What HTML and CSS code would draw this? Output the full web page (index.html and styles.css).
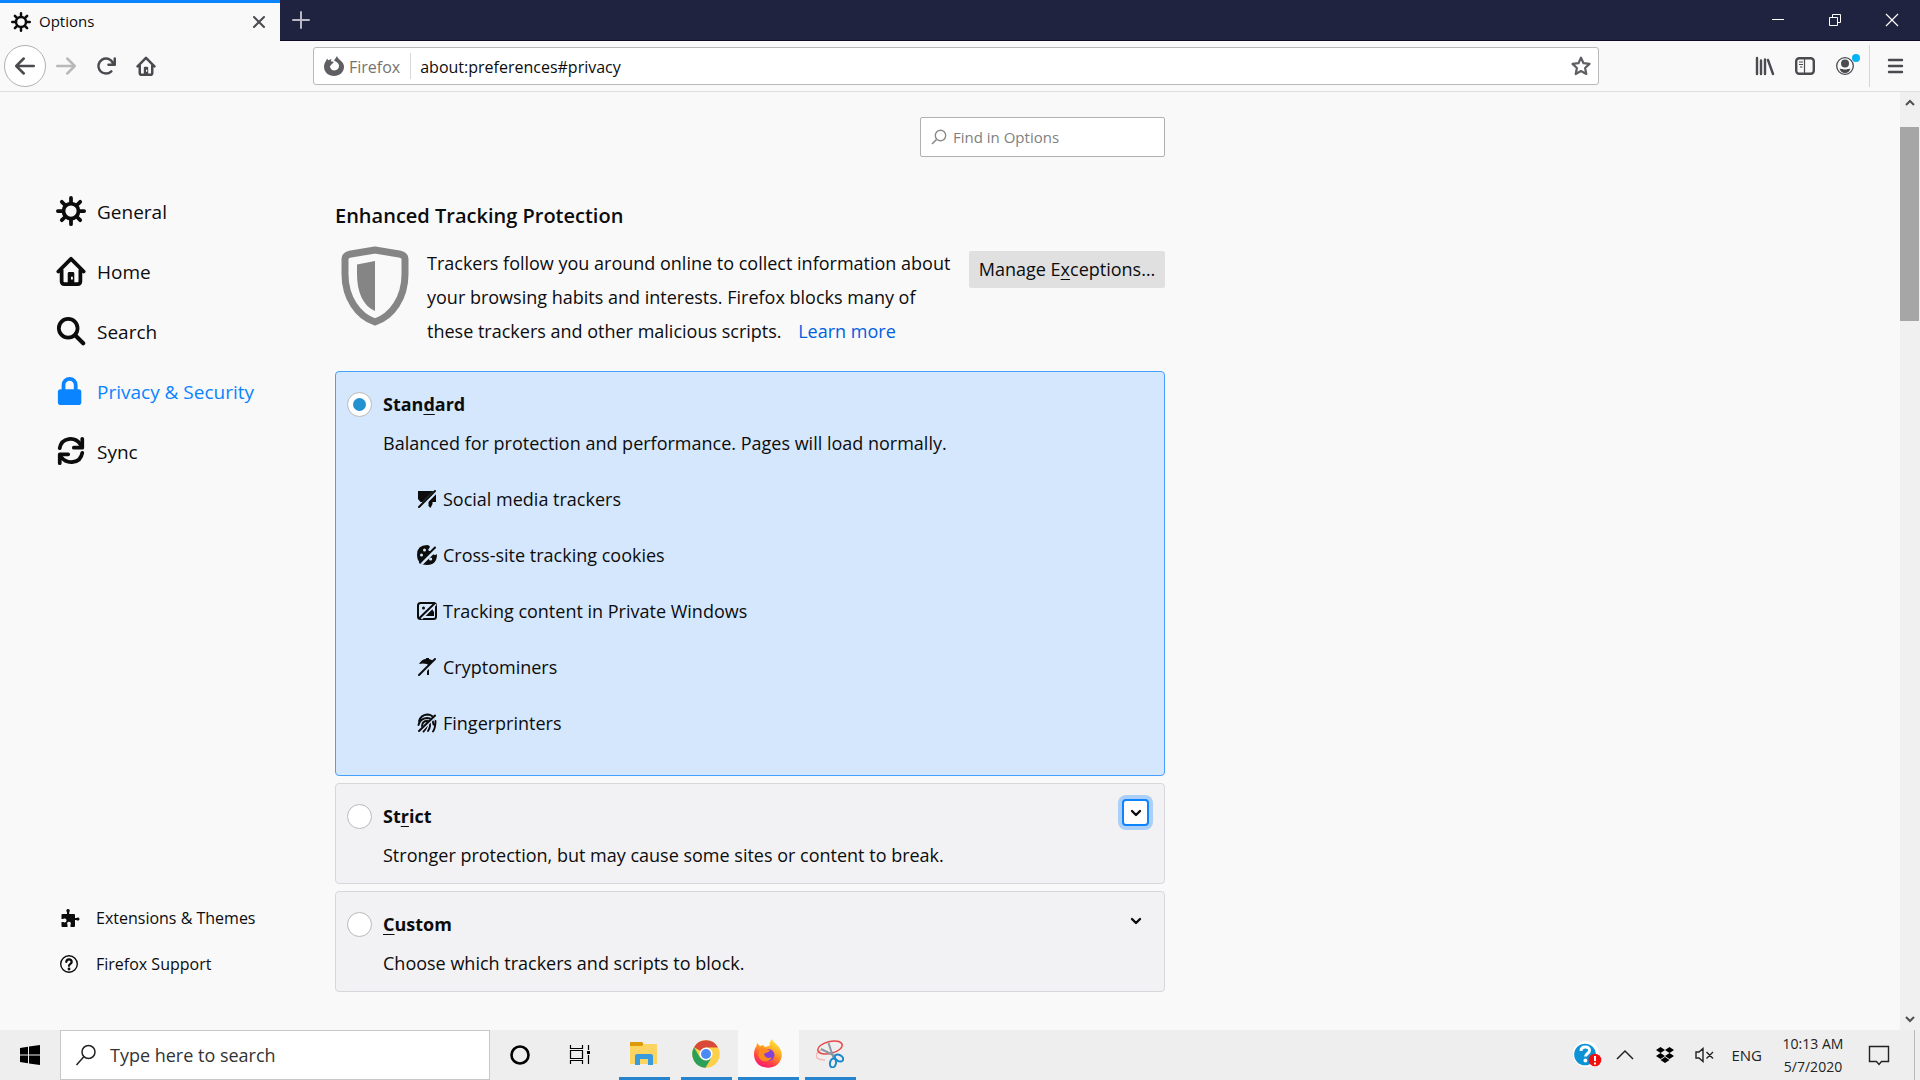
FILE: index.html
```html
<!DOCTYPE html>
<html lang="en">
<head>
  <meta charset="UTF-8">
  <meta name="viewport" content="width=device-width, initial-scale=1.0">
  <title>Options</title>
  <link rel="stylesheet" href="styles.css">
</head>
<body>

<!-- Shared icons -->
<svg class="sprite" aria-hidden="true">
  <symbol id="gear" viewBox="0 0 32 32">
    <circle cx="16" cy="16" r="8" fill="none" stroke="currentColor" stroke-width="4"/>
    <path d="M16 2v5M16 25v5M2 16h5M25 16h5M6.2 6.2l3.4 3.4M22.4 22.4l3.4 3.4M6.2 25.8l3.4-3.4M22.4 9.6l3.4-3.4" stroke="currentColor" stroke-width="4" stroke-linecap="round"/>
  </symbol>
  <symbol id="home" viewBox="0 0 32 32">
    <path d="M2.5 16.500L16 3l13.500 13.500M6 15v12q0 3 3 3h14q3 0 3-3V15" fill="none" stroke="currentColor" stroke-width="4" stroke-linecap="round" stroke-linejoin="round"/>
    <path fill-rule="evenodd" d="M12.500 18.500q0-1.500 1.500-1.500h4q1.500 0 1.500 1.500V30h-7zM16 22h2v3h-2z" fill="currentColor"/>
  </symbol>
  <symbol id="chevron" viewBox="0 0 12 12">
    <path d="M2 4l4 4 4-4" fill="none" stroke="currentColor" stroke-width="2.400" stroke-linecap="round" stroke-linejoin="round"/>
  </symbol>
</svg>

<!-- Tab strip -->
<header class="tabbar">
  <div class="tab">
    <svg class="tab-icon"><use href="#gear"/></svg>
    <span class="tab-title">Options</span>
    <button class="plain" aria-label="Close tab">
      <svg width="14" height="14" viewBox="0 0 14 14"><path d="M2 2l10 10M12 2L2 12" stroke="#4a4a4f" stroke-width="2" stroke-linecap="round"/></svg>
    </button>
  </div>
  <button class="plain new-tab" aria-label="New tab">
    <svg width="18" height="18" viewBox="0 0 18 18"><path d="M9 1v16M1 9h16" stroke="#b8b9c4" stroke-width="2" stroke-linecap="round"/></svg>
  </button>
  <div class="window-buttons">
    <button class="plain" aria-label="Minimize"><svg width="14" height="14"><path d="M1 6.500h12" stroke="#fff"/></svg></button>
    <button class="plain" aria-label="Restore"><svg width="14" height="14"><path d="M1.500 4.500h8v8h-8zM4.500 4V1.500h8v8H10" fill="none" stroke="#fff"/></svg></button>
    <button class="plain" aria-label="Close"><svg width="14" height="14"><path d="M1 1l12 12M13 1L1 13" stroke="#fff" stroke-width="1.200"/></svg></button>
  </div>
</header>

<!-- Navigation toolbar -->
<nav class="toolbar">
  <div class="nav-buttons">
    <button class="plain back" aria-label="Back">
      <svg width="20" height="20" viewBox="0 0 16 16"><path d="M15 7H3.414l4.293-4.293a1 1 0 0 0-1.414-1.414l-6 6a1 1 0 0 0 0 1.414l6 6a1 1 0 0 0 1.414-1.414L3.414 9H15a1 1 0 0 0 0-2z" fill="currentColor"/></svg>
    </button>
    <button class="plain forward" aria-label="Forward" disabled>
      <svg width="20" height="20" viewBox="0 0 16 16"><path d="M1 7h11.586L8.293 2.707a1 1 0 0 1 1.414-1.414l6 6a1 1 0 0 1 0 1.414l-6 6a1 1 0 0 1-1.414-1.414L12.586 9H1a1 1 0 0 1 0-2z" fill="currentColor"/></svg>
    </button>
    <button class="plain" aria-label="Reload">
      <svg width="20" height="20" viewBox="0 0 16 16"><path d="M15 1a1 1 0 0 0-1 1v2.418A6.995 6.995 0 1 0 8 15a6.954 6.954 0 0 0 4.950-2.050 1 1 0 0 0-1.414-1.414A5.019 5.019 0 1 1 12.549 6H10a1 1 0 0 0 0 2h5a1 1 0 0 0 1-1V2a1 1 0 0 0-1-1z" fill="currentColor"/></svg>
    </button>
    <button class="plain" aria-label="Home"><svg width="20" height="20"><use href="#home"/></svg></button>
  </div>
  <div class="urlbar">
    <svg width="20" height="20" viewBox="0 0 20 20"><path d="M13 0c.5 2.500 2.500 3 4 5 2 1.500 3 3.500 3 6 0 5-4.500 9-10 9S0 16 0 11c0-2.500.6-4.500 2-6 .1-1 .5-2 1.300-2.600.2.900.6 1.500 1.300 1.900C5.500 3.600 6.300 3 7.600 2.900 7 3.800 7 4.500 7 5.200c1 .2 2.300.2 2.700 1-.2.900-1.400 1.300-2.200 2 0 .9-1 1-1.700 2 .6 2.800 2.300 4.300 4.700 4.300 2.700 0 4.500-2 4.500-4.400 0-2-1-3-2.500-4L10 4.500C10.800 3 12 2 13 0z" fill="#5f5f63"/></svg>
    <span class="identity">Firefox</span>
    <input class="address" type="text" value="about:preferences#privacy" aria-label="Address">
    <button class="plain" aria-label="Bookmark this page">
      <svg width="20" height="20" viewBox="0 0 20 20"><path d="M10 1.700l2.500 5.500 6 .7-4.400 4.100 1.200 6-5.300-3-5.300 3 1.200-6L1.500 7.900l6-.7z" fill="none" stroke="#5f5f63" stroke-width="2.200" stroke-linejoin="round"/></svg>
    </button>
  </div>
  <div class="tools">
    <button class="plain" aria-label="Library">
      <svg width="20" height="20" viewBox="0 0 20 20"><path d="M2 2v16M6 4.500V18M10 3.500V18M13 4l5 14" stroke="currentColor" stroke-width="2.400" stroke-linecap="round"/></svg>
    </button>
    <button class="plain" aria-label="Sidebars">
      <svg width="20" height="20" viewBox="0 0 20 20"><rect x="1.200" y="2.200" width="17.600" height="15.600" rx="3" fill="none" stroke="currentColor" stroke-width="2.400"/><path d="M9.500 2v16" stroke="currentColor" stroke-width="1.200"/><path d="M4 6h4M4 8.500h4M5 11h2.500" stroke="currentColor" stroke-width="1.200"/></svg>
    </button>
    <button class="plain account" aria-label="Account">
      <svg width="20" height="20" viewBox="0 0 20 20"><circle cx="10" cy="10" r="8.300" fill="none" stroke="currentColor" stroke-width="1.300"/><circle cx="10" cy="7.500" r="4" fill="currentColor"/><path d="M4.500 12.500q2 .5 3 .5 2.500 1 5 0 1 0 3-.5-1.500 4.500-5.500 4.500t-5.500-4.500z" fill="currentColor"/></svg>
      <span class="dot"></span>
    </button>
    <button class="plain menu" aria-label="Open menu">
      <svg width="20" height="20" viewBox="0 0 20 20"><path d="M4 4h13M4 10h13M4 16h13" stroke="currentColor" stroke-width="2.400" stroke-linecap="round"/></svg>
    </button>
  </div>
</nav>

<!-- Page -->
<div class="page">
  <aside class="sidebar">
    <nav class="categories">
      <a href="#general"><svg class="cat-icon"><use href="#gear"/></svg>General</a>
      <a href="#home-page"><svg class="cat-icon"><use href="#home"/></svg>Home</a>
      <a href="#search"><svg class="cat-icon" viewBox="0 0 32 32"><circle cx="13" cy="13" r="10" fill="none" stroke="currentColor" stroke-width="4"/><path d="M20.500 20.500l8.500 8.500" stroke="currentColor" stroke-width="4.400" stroke-linecap="round"/></svg>Search</a>
      <a href="#privacy" class="selected"><svg class="cat-icon" viewBox="0 0 32 32"><rect x="2" y="14" width="25" height="17" rx="3" fill="currentColor"/><path d="M8 15V9.500a6.500 6.500 0 0 1 13 0V15" fill="none" stroke="currentColor" stroke-width="4"/></svg>Privacy &amp; Security</a>
      <a href="#sync"><svg class="cat-icon" viewBox="0 0 32 32"><path d="M4 13C6 1.500 20 0 26 9M28 18C26 29.500 12 31 5 22" fill="none" stroke="currentColor" stroke-width="4" stroke-linecap="round"/><path d="M28 3v9.500H19M4 29v-9.500H13" fill="none" stroke="currentColor" stroke-width="4" stroke-linecap="round" stroke-linejoin="round"/></svg>Sync</a>
    </nav>
    <nav class="side-links">
      <a href="#addons"><svg width="20" height="20" viewBox="0 0 20 20"><path d="M7 6V4.500C5.800 2.500 6.500 1 8 1s2.500 1.500 1.200 3.500V6H14q1 0 1 1v3h1.200c1.800-1 3.300-.5 3.300 1s-1.500 2-3.300 1H15v6q0 1-1 1h-3.500v-2c1-2-.2-3.200-1.500-3.200S6.500 15 7.500 17v2H2.500q-1 0-1-1v-4h1.700c2 1 3.300 0 3.300-1.500S5.200 10 3.200 11H1.500V7q0-1 1-1z" fill="currentColor"/></svg>Extensions &amp; Themes</a>
      <a href="#support"><svg width="20" height="20" viewBox="0 0 20 20"><circle cx="9" cy="10" r="8.300" fill="none" stroke="currentColor" stroke-width="1.400"/><path d="M6.300 8q0-2.700 2.700-2.700T11.700 8c0 1.800-2.700 1.800-2.700 3.800" fill="none" stroke="currentColor" stroke-width="2.200" stroke-linecap="round"/><circle cx="9" cy="15" r="1.400" fill="currentColor"/></svg>Firefox Support</a>
    </nav>
  </aside>

  <main class="content">
    <div class="find">
      <svg width="16" height="16" viewBox="0 0 16 16"><circle cx="9.500" cy="6.500" r="5.200" fill="none" stroke="#8a8a8d" stroke-width="1.400"/><path d="M5.500 10.500L1 15" stroke="#8a8a8d" stroke-width="1.600"/></svg>
      <input type="search" placeholder="Find in Options" aria-label="Find in Options">
    </div>

    <h1>Enhanced Tracking Protection</h1>
    <div class="intro">
      <svg class="shield" viewBox="0 0 68 80"><path d="M34 4l25.500 4.300Q64 9.500 64 13v15C64 52 51 70.500 34 76 17 70.500 4 52 4 28V13q0-3.500 4.500-4.700z" fill="none" stroke="#858585" stroke-width="7" stroke-linejoin="round"/><path d="M16 18.500L34 15v50C22 60 16 46 16 28z" fill="#858585"/></svg>
      <p>Trackers follow you around online to collect information about your browsing habits and interests. Firefox blocks many of these trackers and other malicious scripts. <a class="learn-more" href="#learn">Learn more</a></p>
      <button class="exceptions">Manage E<u>x</u>ceptions…</button>
    </div>

    <form class="levels">
      <section class="level selected">
        <input type="radio" name="level" id="standard" checked>
        <div class="level-body">
          <label for="standard">Stan<u>d</u>ard</label>
          <p>Balanced for protection and performance. Pages will load normally.</p>
          <ul class="trackers">
            <li><svg viewBox="0 0 20 20"><path d="M1 2h15v3L6 13H3.500L1 10zM19 5v8h-3.500v2l-2 4-2-2v-5L18 5z" fill="currentColor"/><path class="gap" d="M3 18.500L19.500 2"/><path class="slash" d="M2 18L18 2"/></svg>Social media trackers</li>
            <li><svg viewBox="0 0 20 20"><path fill-rule="evenodd" d="M10 0q2.500 0 3 2l-2 3 3 2 2 2q2 2 4 0Q20 20 10 20T0 10 10 0zM6 5a1.500 1.500 0 1 0 3 0 1.500 1.500 0 1 0-3 0zM3 10a1.500 1.500 0 1 0 3 0 1.500 1.500 0 1 0-3 0zM12 14a1.600 1.600 0 1 0 3.200 0 1.600 1.600 0 1 0-3.200 0z" fill="currentColor"/><path class="gap" d="M4 18.500L20 3"/><path class="slash" d="M3 17.500L18 2.500"/></svg>Cross-site tracking cookies</li>
            <li><svg viewBox="0 0 20 20"><rect x="1" y="2" width="18" height="16" rx="2.500" fill="none" stroke="currentColor" stroke-width="2"/><circle cx="6.500" cy="7" r="1.500" fill="currentColor"/><path d="M8 15l7-7 2 3v4z" fill="currentColor"/><path class="gap thin" d="M4 17.500L18.500 3"/><path class="slash" d="M2.500 17L17.500 2.500"/></svg>Tracking content in Private Windows</li>
            <li><svg viewBox="0 0 20 20"><path d="M2 7q3-5 7-5V1h3v1l4 1.500L12 9l-2-2q-4-1-8 0zM10 11l2-2v9h-2z" fill="currentColor"/><path class="gap thin" d="M3.500 18.500L19.500 2.500"/><path class="slash" d="M2 18L18 2"/></svg>Cryptominers</li>
            <li><svg viewBox="0 0 20 20"><path d="M2 8q2-6 8-6.500 5 0 7 4M1.500 12Q3 5.500 10 5q6 0 6.500 6.500M5 13q.5-5 5-5 3.500.500 3 5-.5 3-2 5M10 11q0 4-3.500 7.500M18.500 8q0 7-2.500 10.500" fill="none" stroke="currentColor" stroke-width="1.900" stroke-linecap="round"/><path class="gap thin" d="M3 18.500L19.500 2"/><path class="slash" d="M2 18L18 2.500"/></svg>Fingerprinters</li>
          </ul>
        </div>
      </section>
      <section class="level">
        <input type="radio" name="level" id="strict">
        <div class="level-body">
          <label for="strict">St<u>r</u>ict</label>
          <p>Stronger protection, but may cause some sites or content to break.</p>
        </div>
        <button type="button" class="plain expand focused" aria-label="Expand Strict"><svg width="12" height="12"><use href="#chevron"/></svg></button>
      </section>
      <section class="level">
        <input type="radio" name="level" id="custom">
        <div class="level-body">
          <label for="custom"><u>C</u>ustom</label>
          <p>Choose which trackers and scripts to block.</p>
        </div>
        <button type="button" class="plain expand" aria-label="Expand Custom"><svg width="12" height="12"><use href="#chevron"/></svg></button>
      </section>
    </form>
  </main>

  <div class="scrollbar">
    <svg width="20" height="20"><path d="M6 13l4-4 4 4" fill="none" stroke="#505050" stroke-width="2"/></svg>
    <div class="track"><div class="thumb"></div></div>
    <svg width="20" height="20"><path d="M6 7l4 4 4-4" fill="none" stroke="#505050" stroke-width="2"/></svg>
  </div>
</div>

<!-- Taskbar -->
<footer class="taskbar">
  <button class="plain start" aria-label="Start">
    <svg width="20" height="20" viewBox="0 0 20 20"><path d="M0 3l8-1.200v7.700H0zM9 1.600L20 0v9.500H9zM0 10.500h8v7.700L0 17zM9 10.500h11V20L9 18.400z" fill="#000"/></svg>
  </button>
  <label class="task-search">
    <svg width="22" height="22" viewBox="0 0 22 22"><circle cx="13.500" cy="8" r="6.500" fill="none" stroke="#222" stroke-width="1.500"/><path d="M9 12.500L1.500 21" stroke="#222" stroke-width="1.500"/></svg>
    <input type="text" placeholder="Type here to search" aria-label="Type here to search">
  </label>
  <div class="task-tools">
    <button class="plain" aria-label="Cortana"><svg width="20" height="20"><circle cx="10" cy="10" r="8.500" fill="none" stroke="#000" stroke-width="2.600"/></svg></button>
    <button class="plain" aria-label="Task view"><svg width="22" height="20"><path d="M1.500 0v3.500h12V0M1.500 19v-3.500h12V19M1.500 5.500h12v8h-12zM19.500 0v5M19.500 10v9" fill="none" stroke="#000" stroke-width="1.200"/><path d="M18 6h3v3h-3z"/></svg></button>
  </div>
  <div class="apps">
    <button class="plain app" aria-label="File Explorer">
      <svg width="28" height="28" viewBox="0 0 28 28"><path d="M0 3q0-1 1-1h11l2 2h12.500q.5 0 .5.500V24H0z" fill="#fcd462"/><path d="M0 2.500Q0 2 1 2h11l1 1v2l-1 1H0z" fill="#dc9a08"/><path d="M5 25V16q0-2 2-2h14q2 0 2 2v9h-5v-6h-8v6z" fill="#3a9ade"/></svg>
    </button>
    <button class="plain app" aria-label="Chrome">
      <svg width="28" height="28" viewBox="0 0 28 28"><circle cx="14" cy="14" r="13.700" fill="#fcd04b"/><path d="M14 14L2 7.200A13.700 13.700 0 0 1 26 7.500H14z" fill="#d8483b"/><path d="M2 7.200A13.700 13.700 0 0 0 13.500 27.700L19.500 17.500 14 20 8 17.500z" fill="#2c9f58"/><circle cx="14" cy="14" r="6.500" fill="#fff"/><circle cx="14" cy="14" r="5" fill="#4a8af4"/></svg>
    </button>
    <button class="plain app active" aria-label="Firefox">
      <svg width="28" height="29" viewBox="0 0 28 29">
        <defs><linearGradient id="flame" x1=".8" y1="0" x2=".3" y2="1"><stop offset="0" stop-color="#fff23c"/><stop offset=".45" stop-color="#ff9b22"/><stop offset=".75" stop-color="#ff4145"/><stop offset="1" stop-color="#f5187a"/></linearGradient></defs>
        <path d="M18 0c1 4 8 6 9.500 13.500C29 22 22.500 28.700 14 28.700S0 23 0 15c0-3 .8-6 2.500-8L3 4l3 3 3-1 2 2c2-.5 3-1 4.500-1C15.500 4 16 2 18 0z" fill="url(#flame)"/>
        <circle cx="14.500" cy="16" r="6" fill="#8440d8"/>
        <path d="M6 10c3-3 6 0 10 1-1 3-4 2-6 4 1 4 5 5 8 3-3 7-13 5-14-2z" fill="#ff8a1f"/>
      </svg>
    </button>
    <button class="plain app" aria-label="Snipping Tool">
      <svg width="28" height="28" viewBox="0 0 28 28" fill="none"><path d="M9 20C-2 20-2 14 5 10" stroke="#f5b8b8" stroke-width="1.500"/><ellipse cx="14" cy="7.500" rx="12.500" ry="6" transform="rotate(-14 14 7.500)" stroke="#e74a4a" stroke-width="1.500"/><path d="M12.500 3l5 15M5 9l14 7" stroke="#8b98a3" stroke-width="2"/><ellipse cx="23" cy="18" rx="4.500" ry="3" transform="rotate(30 23 18)" stroke="#1c87c9" stroke-width="2"/><ellipse cx="17" cy="23" rx="3" ry="4.500" transform="rotate(12 17 23)" stroke="#1c87c9" stroke-width="2"/></svg>
    </button>
  </div>
  <div class="tray">
    <button class="plain help" aria-label="Help"><svg width="30" height="28" viewBox="0 0 30 28"><circle cx="14" cy="13" r="13" fill="#fff"/><circle cx="13" cy="13.500" r="10.800" fill="#0b93d6"/><path d="M9 10q0-4 4.300-4t4.200 3.600c0 3-4 2.700-4 6" fill="none" stroke="#fff" stroke-width="3"/><circle cx="13.400" cy="19.500" r="1.900" fill="#fff"/><circle cx="23" cy="19" r="6.300" fill="#f01010"/><path d="M23 15v5M23 21.500v2" stroke="#fff" stroke-width="2"/></svg></button>
    <button class="plain" aria-label="Show hidden icons"><svg width="18" height="18"><path d="M1 13l8-8 8 8" fill="none" stroke="#222" stroke-width="1.500"/></svg></button>
    <button class="plain" aria-label="Dropbox"><svg width="18" height="18" viewBox="0 0 18 18"><path d="M4.500 1L9 4 4.500 7 0 4zM13.500 1L18 4l-4.500 3L9 4zM4.500 7L9 10l-4.500 3L0 10zM13.500 7l4.500 3-4.500 3L9 10zM4.500 14L9 11l4.500 3L9 17z" fill="#000"/></svg></button>
    <button class="plain" aria-label="Volume muted"><svg width="20" height="16" viewBox="0 0 20 16"><path d="M1 5h3l4-3.500v13L4 11H1zM11.500 5l6.500 6.500M18 5l-6.500 6.500" fill="none" stroke="#222" stroke-width="1.400"/></svg></button>
    <span class="language">ENG</span>
    <div class="clock"><span>10:13 AM</span><span>5/7/2020</span></div>
    <button class="plain notes" aria-label="Notifications"><svg width="22" height="22" viewBox="0 0 22 22"><path d="M1.500 2.500h19v15h-7l-2.500 3-2.500-3h-7z" fill="none" stroke="#222" stroke-width="1.400"/></svg></button>
    <span class="desktop-edge"></span>
  </div>
</footer>

</body>
</html>
```
FILE: styles.css
```css
* { box-sizing: border-box; }
body { margin: 0; height: 100vh; display: flex; flex-direction: column; font-family: "Open Sans", "Noto Sans", sans-serif; font-size: 18px; color: #0c0c0d; background: #f9f9fa; overflow: hidden; }
a { color: inherit; text-decoration: none; }
button, input { font: inherit; color: inherit; }
svg { display: block; flex: none; }
u { text-decoration-thickness: 1px; text-underline-offset: 3px; }
.sprite { position: absolute; width: 0; height: 0; }
.plain { border: 0; padding: 0; background: none; display: flex; align-items: center; justify-content: center; }

/* tab strip */
.tabbar { flex: none; height: 41px; display: flex; align-items: center; background: #202340; border-bottom: 1px solid #0c0c2a; }
.tab { width: 280px; height: 41px; padding: 0 14px 0 11px; display: flex; align-items: center; gap: 8px; background: #f9f9fa; border-top: 3px solid #0a84ff; font-size: 15px; }
.tab-icon { width: 20px; height: 20px; }
.tab-title { flex: 1; padding-bottom: 2px; }
.new-tab { width: 42px; height: 40px; }
.window-buttons { margin-left: auto; display: flex; }
.window-buttons button { width: 57px; height: 40px; }

/* toolbar */
.toolbar { flex: none; height: 51px; display: flex; align-items: center; border-bottom: 1px solid #e0e0e1; color: #4a4a4f; }
.nav-buttons { width: 313px; padding-left: 4px; display: flex; align-items: center; }
.nav-buttons button { width: 40px; height: 42px; }
.nav-buttons .back { width: 42px; border: 1px solid #b1b1b3; border-radius: 50%; background: #fff; }
.nav-buttons .forward { color: #b9b9ba; }
.urlbar { flex: 1; height: 38px; padding: 0 7px 0 10px; display: flex; align-items: center; background: #fff; border: 1px solid #b9b9bb; border-radius: 3px; }
.identity { height: 26px; margin-left: 5px; padding-right: 10px; line-height: 28px; font-size: 16px; color: #737373; border-right: 1px solid #d7d7db; }
.address { flex: 1; min-width: 0; padding: 2px 9px 0; border: 0; outline: 0; background: none; font-size: 16px; color: #0c0c0d; }
.tools { width: 321px; padding-left: 146px; display: flex; align-items: center; }
.tools button { width: 40px; height: 42px; }
.tools .account { position: relative; width: 45px; border-right: 1px solid #d7d7db; padding-right: 4px; }
.dot { position: absolute; top: 9px; right: 9px; width: 8px; height: 8px; border-radius: 50%; background: #00b3f4; }
.tools .menu { width: 50px; }

/* page */
.page { flex: 1; min-height: 0; display: flex; }
.sidebar { width: 335px; padding: 90px 0 43px 56px; display: flex; flex-direction: column; justify-content: space-between; }
.categories a { height: 60px; display: flex; align-items: center; gap: 11px; font-size: 19px; }
.cat-icon { width: 30px; height: 30px; margin-bottom: 3px; }
.categories .selected { color: #0a84ff; }
.side-links a { height: 46px; padding-left: 4px; display: flex; align-items: center; gap: 16px; font-size: 16px; }
.content { width: 830px; padding-top: 25px; }
.find { width: 245px; height: 40px; margin-left: auto; padding: 0 10px; display: flex; align-items: center; gap: 6px; background: #fff; border: 1px solid #b1b1b3; border-radius: 2px; }
.find input { flex: 1; min-width: 0; padding: 0; border: 0; outline: 0; background: none; font-size: 15px; }
.find input::placeholder { color: #808080; }
h1 { margin: 44px 0 0; font-size: 20px; line-height: 30px; font-weight: 600; }
.intro { display: flex; align-items: flex-start; margin-top: 15px; }
.shield { width: 68px; height: 80px; margin-left: 6px; }
.intro p { flex: 1; margin: 0 0 0 18px; line-height: 34px; }
.learn-more { margin-left: 12px; color: #0060df; }
.exceptions { width: 196px; height: 37px; margin: 5px 0 0 10px; padding: 0 0 2px; border: 0; border-radius: 2px; background: #e0e0e1; white-space: nowrap; }

/* protection levels */
.levels { margin-top: 23px; display: flex; flex-direction: column; gap: 7px; }
.level { padding: 15px 15px 8px; display: flex; align-items: flex-start; background: #f2f2f4; border: 1px solid #d7d7db; border-radius: 4px; }
.level.selected { padding-bottom: 24px; background: #d5e7fc; border-color: #45a1ff; }
.level input { appearance: none; flex: none; width: 25px; height: 25px; margin: 5px 11px 0 -4px; border: 1px solid #b9b9bb; border-radius: 50%; background: #fff; display: grid; place-items: center; }
.level input:checked::before { content: ""; width: 13px; height: 13px; border-radius: 50%; background: #2292d0; }
.level-body { flex: 1; }
.level label { display: block; line-height: 34px; font-weight: 700; }
.level p { margin: 2px 0 0; line-height: 40px; }
.trackers { list-style: none; margin: 8px 0 0; padding: 0 0 0 34px; }
.trackers li { height: 56px; display: flex; align-items: center; gap: 6px; }
.trackers svg { width: 20px; height: 20px; }
.gap { stroke: #d5e7fc; stroke-width: 4; fill: none; }
.gap.thin { stroke-width: 3; }
.slash { stroke: #0c0c0d; stroke-width: 2; stroke-linecap: round; }
.expand { width: 27px; height: 27px; border-radius: 4px; }
.expand.focused { border: 2px solid #0a84ff; background: #fff; box-shadow: 0 0 0 4px #abcff7; }

/* scrollbar */
.scrollbar { width: 20px; margin-left: auto; display: flex; flex-direction: column; background: #f0f0f0; }
.track { flex: 1; padding-top: 15px; }
.thumb { width: 19px; height: 22%; background: #a6a6a6; }

/* taskbar */
.taskbar { flex: none; height: 50px; display: flex; align-items: stretch; background: #eee; }
.start { width: 60px; }
.task-search { width: 430px; padding-left: 14px; display: flex; align-items: center; gap: 13px; background: #fff; border: 1px solid #c8c8c8; }
.task-search input { flex: 1; min-width: 0; padding: 0; border: 0; outline: 0; background: none; }
.task-search input::placeholder { color: #333; }
.task-tools { display: flex; }
.task-tools button { width: 60px; }
.apps { margin-left: 9px; display: flex; gap: 11px; }
.app { width: 51px; padding-right: 2px; border-bottom: 3px solid #2684cf; }
.app.active { width: 61px; margin: 0 -5px; background: #f9f9fa; }
.tray { margin-left: auto; display: flex; align-items: center; font-size: 15px; color: #222; }
.tray button { width: 40px; }
.tray .help { width: 36px; }
.language { margin: 0 6px; }
.clock { width: 90px; display: flex; flex-direction: column; align-items: center; line-height: 23px; font-size: 14px; }
.tray .notes { width: 42px; margin-right: 14px; }
.desktop-edge { width: 6px; height: 50px; border-left: 1px solid #bbb; }
```
